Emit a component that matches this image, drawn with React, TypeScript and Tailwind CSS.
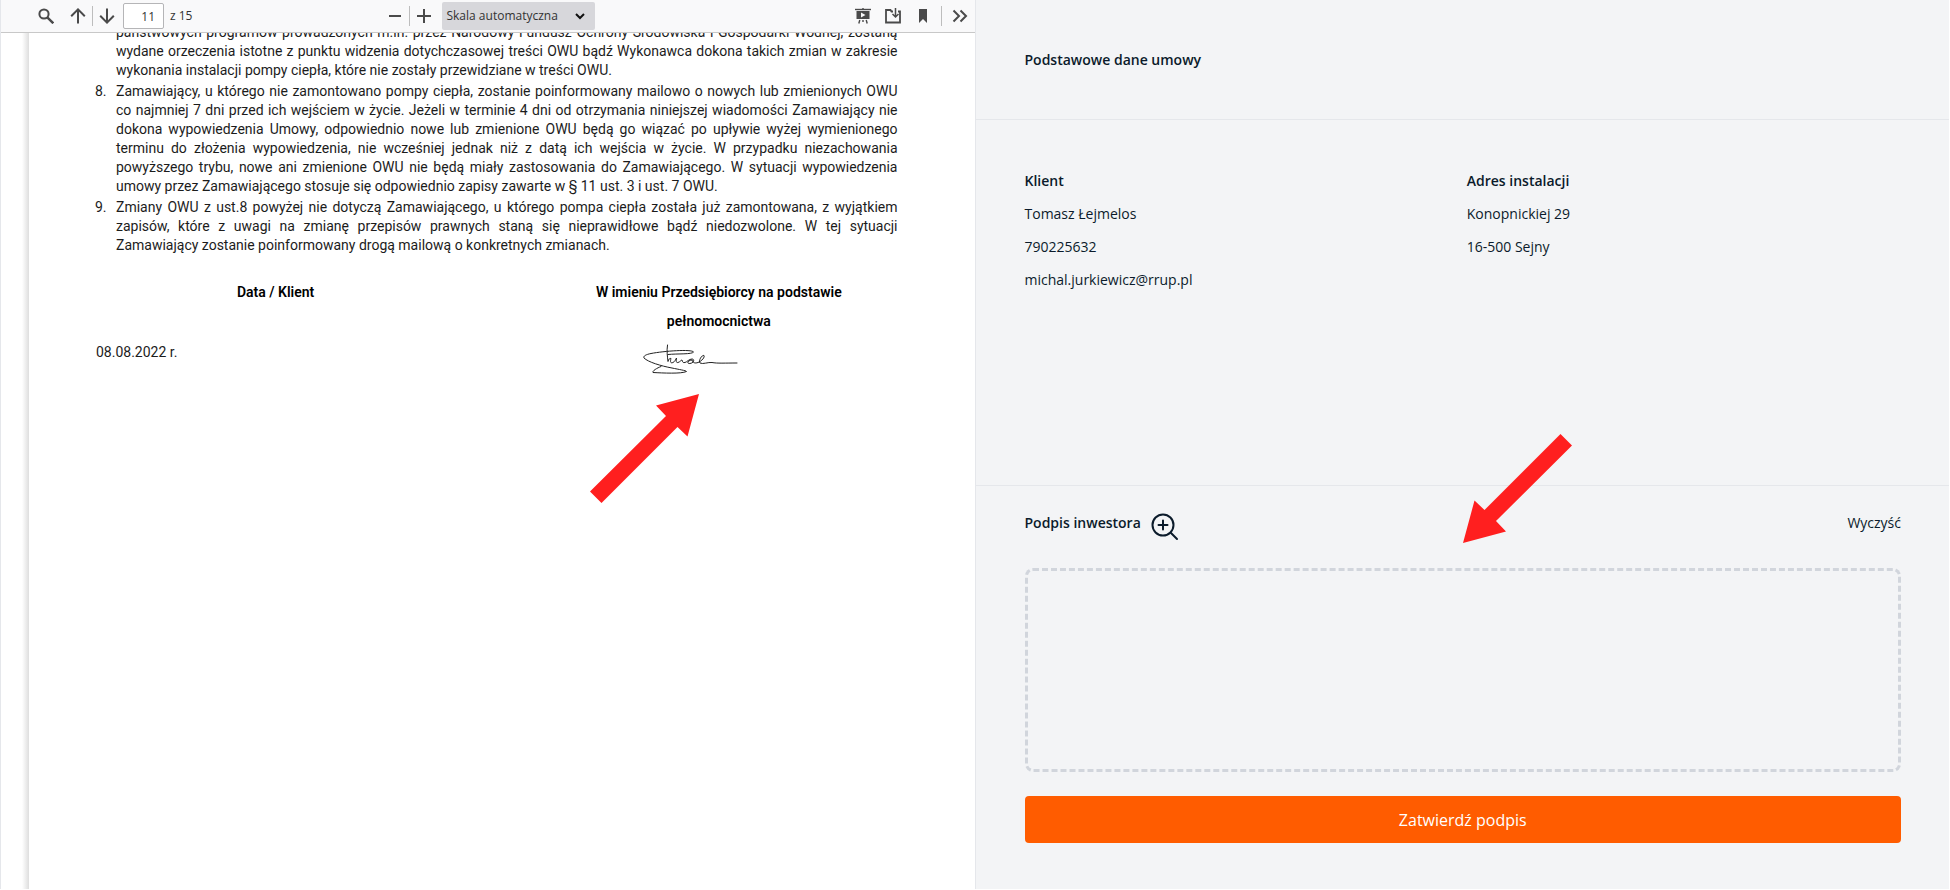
import clsx from "clsx";
import type { ReactNode } from "react";

const terms: { number?: string; lines: string[] }[] = [
  {
    lines: [
      "państwowych programów prowadzonych m.in. przez Narodowy Fundusz Ochrony Środowiska i Gospodarki Wodnej, zostaną",
      "wydane orzeczenia istotne z punktu widzenia dotychczasowej treści OWU bądź Wykonawca dokona takich zmian w zakresie",
      "wykonania instalacji pompy ciepła, które nie zostały przewidziane w treści OWU.",
    ],
  },
  {
    number: "8.",
    lines: [
      "Zamawiający, u którego nie zamontowano pompy ciepła, zostanie poinformowany mailowo o nowych lub zmienionych OWU",
      "co najmniej 7 dni przed ich wejściem w życie. Jeżeli w terminie 4 dni od otrzymania niniejszej wiadomości Zamawiający nie",
      "dokona wypowiedzenia Umowy, odpowiednio nowe lub zmienione OWU będą go wiązać po upływie wyżej wymienionego",
      "terminu do złożenia wypowiedzenia, nie wcześniej jednak niż z datą ich wejścia w życie. W przypadku niezachowania",
      "powyższego trybu, nowe ani zmienione OWU nie będą miały zastosowania do Zamawiającego. W sytuacji wypowiedzenia",
      "umowy przez Zamawiającego stosuje się odpowiednio zapisy zawarte w § 11 ust. 3 i ust. 7 OWU.",
    ],
  },
  {
    number: "9.",
    lines: [
      "Zmiany OWU z ust.8 powyżej nie dotyczą Zamawiającego, u którego pompa ciepła została już zamontowana, z wyjątkiem",
      "zapisów, które z uwagi na zmianę przepisów prawnych staną się nieprawidłowe bądź niedozwolone. W tej sytuacji",
      "Zamawiający zostanie poinformowany drogą mailową o konkretnych zmianach.",
    ],
  },
];

function ToolButton({ label, children }: { label: string; children: ReactNode }) {
  return (
    <button type="button" aria-label={label} className="flex h-7 w-7 items-center justify-center rounded-sm text-[#4a4a4a] hover:bg-gray-200">
      <svg className="h-4 w-4" viewBox="0 0 16 16" fill="none" stroke="currentColor" strokeWidth="2">
        {children}
      </svg>
    </button>
  );
}

function Separator() {
  return <div className="h-5 w-px bg-[#bdbdbd]" />;
}

function ViewerToolbar() {
  return (
    <div className="flex h-[33px] items-center justify-between border-b border-[#c8c8c8] bg-[#f9f9fa] pr-px pl-[31px] font-['Open_Sans',sans-serif] text-xs text-[#333]">
      <div className="flex items-center">
        <ToolButton label="Znajdź">
          <circle cx="6" cy="6" r="4.6" />
          <path d="M9.3 9.3l6 6" strokeWidth="2.4" />
        </ToolButton>
        <div className="ml-1 flex items-center">
          <ToolButton label="Poprzednia strona">
            <path d="M8 15.500V1.500M1.200 8.200L8 1.400l6.800 6.800" />
          </ToolButton>
          <Separator />
          <ToolButton label="Następna strona">
            <path d="M8 .5v14M1.200 7.800L8 14.600l6.800-6.800" />
          </ToolButton>
        </div>
        <input aria-label="Strona" defaultValue="11" className="ml-0.5 h-[26px] w-[41px] rounded-xs border border-[#b5b5b7] bg-white px-2 text-right" />
        <span className="ml-1.5">z 15</span>
      </div>
      <div className="mr-16 flex items-center">
        <ToolButton label="Pomniejsz">
          <path d="M2 8h12" />
        </ToolButton>
        <Separator />
        <ToolButton label="Powiększ">
          <path d="M1 8h14M8 1v14" />
        </ToolButton>
        <div className="relative ml-1">
          <select aria-label="Skala" className="h-7 w-[153px] appearance-none rounded-xs bg-[#d7d7db] pl-1">
            <option>Skala automatyczna</option>
          </select>
          <svg className="pointer-events-none absolute top-2.5 right-2.5 h-2 w-2.5" viewBox="0 0 10 8" fill="none" stroke="#111" strokeWidth="2">
            <path d="M1 2l4 4 4-4" />
          </svg>
        </div>
      </div>
      <div className="flex items-center">
        <ToolButton label="Tryb prezentacji">
          <path d="M0 1.500h16" strokeWidth="1.400" />
          <path d="M1.500 3h13v8h-13z M6 4.500v5l4.500-2.500z" fill="currentColor" fillRule="evenodd" stroke="none" />
          <path d="M8 0v1.500M4.800 12l-1 3.500M11.200 12l1 3.500M8 12v2" strokeWidth="1.400" />
        </ToolButton>
        <div className="ml-0.5 flex items-center">
          <ToolButton label="Otwórz">
            <path d="M8 3.500H6.500L5.500 2H1v12.500h14V3.500h-2" strokeWidth="1.800" />
            <path d="M10.500 0v8.500M7.500 6l3 3 3-3" strokeWidth="1.500" />
          </ToolButton>
        </div>
        <div className="ml-0.5 flex items-center">
          <ToolButton label="Zakładka">
            <path d="M4 1h8v14l-4-4-4 4z" fill="currentColor" stroke="none" />
          </ToolButton>
        </div>
        <div className="ml-1 flex items-center gap-1">
          <Separator />
          <ToolButton label="Narzędzia">
            <path d="M1.500 2.500L7 8l-5.500 5.500M8.500 2.500L14 8l-5.500 5.500" />
          </ToolButton>
        </div>
      </div>
    </div>
  );
}

function Signature() {
  return (
    <svg className="mt-2 mr-14 h-[30px] w-[95px]" viewBox="0 0 95 30" fill="none" stroke="#222" strokeWidth="1" strokeLinecap="round" role="img" aria-label="Podpis">
      <path d="M24.500 1C23.500 7 24.500 13 25 17.500C25.500 15 27 14 28 14.500C27 18 27.500 19.500 30 18.500C32 17.500 33 15 33.500 14C33 17 33 19 35 18.500C37 18 38 16 39 16C39.500 18 40 19 42 18.500C44 18 46 15 49 15C52 15 51 19 47 19.500C43 20 45 16 49 16C50 19 52 19.500 55 18.500C59 17 62 13 61 11.500C59 10.500 55 17 57 19C60 20.500 65 18 69 18.500C74 19.500 82 19 94 19" />
      <path d="M25 10.500C35 9.500 49 10.500 50.500 8C49 5 21 7 8 9.500C3 10.500 0 12 1 14C5 18 18 22 29 24C36 25.500 43 26.500 43.500 27.500C38 30 20 29 10 28.500C9 27 14 24 18 22.500" />
    </svg>
  );
}

function Arrow({ className }: { className: string }) {
  return (
    <svg className={clsx("pointer-events-none absolute h-[109px] w-[109px]", className)} viewBox="0 0 109 109" aria-hidden="true">
      <path d="M109 0L97.500 42.500 87.500 33 11.500 109 0 97.500 76 22 66 11.500z" fill="#ff1f1f" />
    </svg>
  );
}

function DocumentViewer() {
  return (
    <div className="flex w-1/2 flex-col border-l border-gray-200">
      <ViewerToolbar />
      <div className="flex flex-1">
        <div className="w-7 bg-linear-to-r from-white from-75% to-[#dedede]" />
        <div className="relative flex-1 overflow-hidden bg-white pr-[77px] pl-[66px] font-['Roboto',sans-serif] text-sm text-[#1c1c1c]">
          <ol className="-mt-2.5 space-y-0.5 leading-[19px]">
            {terms.map((term) => (
              <li key={term.lines[0]} className="flex">
                <span className="w-[21px] shrink-0">{term.number}</span>
                <p className="flex-1 whitespace-nowrap">
                  {term.lines.map((line, index) => (
                    <span key={line} className={clsx("block", index < term.lines.length - 1 && "[text-align-last:justify]")}>
                      {line}
                    </span>
                  ))}
                </p>
              </li>
            ))}
          </ol>
          <div className="mt-[23px] flex text-center leading-[29px] font-semibold text-black">
            <div className="w-[45%]">Data / Klient</div>
            <div className="flex flex-1 flex-col items-center pl-[84px]">
              <span>W imieniu Przedsiębiorcy na podstawie</span>
              <span>pełnomocnictwa</span>
              <Signature />
            </div>
          </div>
          <p className="-mt-8 pl-px leading-5">08.08.2022 r.</p>
          <Arrow className="top-[361px] left-[561px]" />
        </div>
      </div>
    </div>
  );
}

function Details({ title, rows }: { title: string; rows: string[] }) {
  return (
    <div className="space-y-[13px]">
      <h2 className="font-semibold">{title}</h2>
      {rows.map((row) => (
        <p key={row}>{row}</p>
      ))}
    </div>
  );
}

function ContractPanel() {
  return (
    <div className="relative flex w-1/2 flex-col border-l border-gray-200 bg-gray-100 font-['Open_Sans',sans-serif] text-sm leading-5 text-[#0b1b2b]">
      <section className="h-[120px] border-b border-gray-200 px-[49px] pt-[50px]">
        <h2 className="font-semibold">Podstawowe dane umowy</h2>
      </section>
      <section className="grid h-[366px] grid-cols-2 gap-x-2 border-b border-gray-200 pr-12 pl-[49px] pt-[51px] font-medium">
        <Details title="Klient" rows={["Tomasz Łejmelos", "790225632", "michal.jurkiewicz@rrup.pl"]} />
        <Details title="Adres instalacji" rows={["Konopnickiej 29", "16-500 Sejny"]} />
      </section>
      <section className="pr-12 pl-[49px] pt-[27px]">
        <div className="flex items-start justify-between">
          <div className="flex items-start gap-2.5">
            <h2 className="font-semibold">Podpis inwestora</h2>
            <button type="button" aria-label="Powiększ podpis">
              <svg className="h-7 w-7" viewBox="0 0 28 28" fill="none" stroke="currentColor" strokeWidth="2" strokeLinecap="round">
                <circle cx="12" cy="12" r="10.500" />
                <path d="M20 20l6 6M12 7.500v9M7.500 12h9" />
              </svg>
            </button>
          </div>
          <button type="button">Wyczyść</button>
        </div>
        <div className="mt-[27px] h-[204px] rounded-lg border-3 border-dashed border-gray-300" />
        <button type="button" className="mt-6 h-[47px] w-full rounded bg-[#ff5c00] text-base text-white">
          Zatwierdź podpis
        </button>
      </section>
      <Arrow className="top-[434px] left-[487px] rotate-180" />
    </div>
  );
}

export default function App() {
  return (
    <main className="flex min-h-screen bg-white pr-px pb-px">
      <DocumentViewer />
      <ContractPanel />
    </main>
  );
}
